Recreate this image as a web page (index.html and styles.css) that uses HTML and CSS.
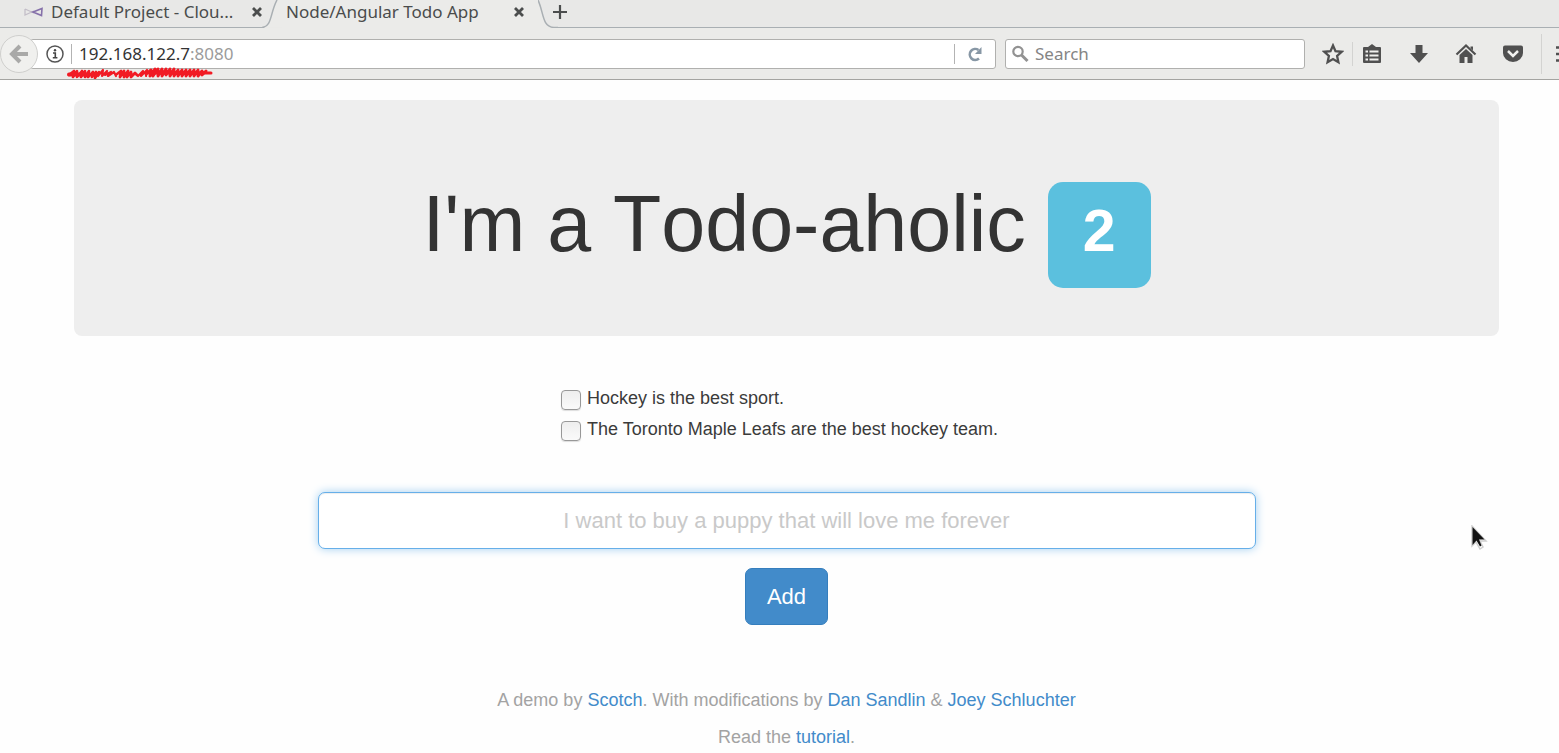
FILE: index.html
```
<!DOCTYPE html>
<html lang="en">
<head>
<meta charset="utf-8">
<title>Node/Angular Todo App</title>
<link rel="stylesheet" href="styles.css">
</head>
<body>
<header class="browser">
  <div class="tabs">
    <div class="tab tab-idle">
      <svg class="favicon" width="20" height="10" viewBox="0 0 20 10" fill="none"><path d="M1 2v6l9-4M1 2l9 4" stroke="#c3bec8" stroke-width="1.3"/><path d="M9 5l9-3.500-.5 7z" stroke="#8671aa" stroke-width="1.600"/></svg>
      <span class="tab-title">Default Project - Clou...</span>
      <button class="close" aria-label="Close Default Project"><svg width="10" height="10" viewBox="0 0 10 10"><path d="M1 1l8 8M9 1L1 9" stroke="#4b4d4d" stroke-width="2.800"/></svg></button>
    </div>
    <svg class="edge" width="20" height="28" viewBox="0 0 20 28"><path d="M15 0C8 13 10 27 0 27.500H20V0z" fill="#ebebe9"/><path d="M15 0C8 13 10 27 0 27.500" fill="none" stroke="#a9afb3" stroke-width="1.500"/></svg>
    <div class="tab tab-current">
      <span class="tab-title">Node/Angular Todo App</span>
      <button class="close" aria-label="Close Todo App"><svg width="10" height="10" viewBox="0 0 10 10"><path d="M1 1l8 8M9 1L1 9" stroke="#4b4d4d" stroke-width="2.800"/></svg></button>
    </div>
    <svg class="edge" width="20" height="28" viewBox="0 0 20 28"><path d="M0 0C6 13 4 27 16 27.500H20V28H0z" fill="#ebebe9"/><path d="M0 0C6 13 4 27 16 27.500H20" fill="none" stroke="#a9afb3" stroke-width="1.500"/></svg>
    <div class="strip"><button class="new-tab" aria-label="New tab"><svg width="16" height="16" viewBox="0 0 16 16"><path d="M8 1v14M1 8h14" stroke="#4b4d4d" stroke-width="2.200"/></svg></button></div>
  </div>
  <div class="toolbar">
    <button class="back" aria-label="Back"><svg width="20" height="20" viewBox="0 0 20 20"><path d="M11 2L3 10l8 8M4 10h15" fill="none" stroke="#a9a9a8" stroke-width="4"/></svg></button>
    <div class="address">
      <svg width="18" height="18" viewBox="0 0 18 18"><circle cx="9" cy="9" r="8" fill="none" stroke="#555" stroke-width="1.500"/><path d="M7 8h2.300v4.500M6.800 12.700h4.600" fill="none" stroke="#444" stroke-width="1.600"/><circle cx="9" cy="5.200" r="1.200" fill="#444"/></svg>
      <span class="divider"></span>
      <span class="url">192.168.122.7<span class="port">:8080</span></span>
      <span class="divider"></span>
      <button class="reload" aria-label="Reload"><svg width="16" height="16" viewBox="0 0 16 16"><path d="M12 12.500A5.500 5.500 0 1 1 11.500 4" fill="none" stroke="#8797a5" stroke-width="2.600"/><path d="M14.500 1v7H8z" fill="#8797a5"/></svg></button>
      <svg class="scribble" width="148" height="12" viewBox="0 0 148 12" fill="none" stroke="#f11b24" stroke-linecap="round" stroke-linejoin="round"><path d="M2 7.500h15" stroke-width="4"/><path d="M2 8l5-4-1 6 4-6 0 6 5-6-1 6 4-6v6l4-6-1 6 5-5-1 5 4-5-1 6 4-6" stroke-width="2.600"/><path d="M31 9l5-6-1 6 5-5-2 4 6-3-3 4 6-4 2 4" stroke-width="2.200"/><path d="M50 7l4-3-1 6 4-6v6l4-6-1 6 4-5v5l4-4 2 2" stroke-width="2.800"/><path d="M71 9l5-5-2 5 6-6-1 6" stroke-width="2.200"/><path d="M79 7l5-4-1 6 5-7-2 7 5-7v7l4-7v7l4-7v6l4-6v7l4-7v7l4-6v6l4-6v6l4-6v6l4-6v6l4-6v6l4-6v6l4-5v4l4-4" stroke-width="2.900"/><path d="M82 6h62" stroke-width="3"/></svg>
    </div>
    <label class="search">
      <svg width="18" height="18" viewBox="0 0 18 18" fill="none" stroke="#929292"><circle cx="7" cy="6.500" r="4.700" stroke-width="2.200"/><path d="M10.500 10l6 6" stroke-width="3"/></svg>
      <input class="search-input" type="text" placeholder="Search" aria-label="Search">
    </label>
    <nav class="tools" aria-label="Browser tools">
      <button class="tool" aria-label="Bookmark"><svg width="22" height="22" viewBox="0 0 22 22"><path d="M11 2.500l2.500 5.700 6.200.6-4.600 4.200 1.300 6.200L11 16l-5.400 3.200L6.900 13 2.300 8.800l6.200-.6z" fill="none" stroke="#505050" stroke-width="2.300"/></svg></button>
      <span class="tool-divider"></span>
      <button class="tool" aria-label="Bookmarks list"><svg width="22" height="22" viewBox="0 0 22 22"><path d="M3 4h4l4-3 4 3h4a1 1 0 0 1 1 1v14a1 1 0 0 1-1 1H3a1 1 0 0 1-1-1V5a1 1 0 0 1 1-1z" fill="#505050"/><path d="M4.500 8.500h2.500m1.500 0h9M4.500 12.500h2.500m1.500 0h9M4.500 16.500h2.500m1.500 0h9" stroke="#f1f1ef" stroke-width="2"/></svg></button>
      <button class="tool" aria-label="Downloads"><svg width="22" height="22" viewBox="0 0 22 22"><path d="M7.500 2h7v8H20l-9 10L2 10h5.500z" fill="#505050"/></svg></button>
      <button class="tool" aria-label="Home"><svg width="22" height="22" viewBox="0 0 22 22"><path d="M1.500 11.500L11 2.500l9.500 9" fill="none" stroke="#505050" stroke-width="2.200"/><path d="M15.500 3.500H18v4l-2.500-2.500zM4.500 12L11 6l6.500 6v8h-5v-6h-3v6h-5z" fill="#505050"/></svg></button>
      <button class="tool" aria-label="Pocket"><svg width="22" height="22" viewBox="0 0 22 22"><path d="M3 2.500h16a2 2 0 0 1 2 2V10a10 9 0 0 1-20 0V4.500a2 2 0 0 1 2-2z" fill="#505050"/><path d="M6 8l5 5 5-5" fill="none" stroke="#f1f1ef" stroke-width="2.500"/></svg></button>
      <span class="tool-divider tall"></span>
      <button class="menu" aria-label="Menu"><svg width="3" height="18" viewBox="0 0 3 18"><path d="M0 2.500h3M0 9h3M0 15.500h3" stroke="#505050" stroke-width="2.500"/></svg></button>
    </nav>
  </div>
</header>
<main class="page">
  <section class="jumbotron">
    <h1 class="headline">I'm a Todo-aholic <span class="count">2</span></h1>
  </section>
  <div class="todos">
    <label class="todo"><input class="tick" type="checkbox"> Hockey is the best sport.</label>
    <label class="todo"><input class="tick" type="checkbox"> The Toronto Maple Leafs are the best hockey team.</label>
  </div>
  <form class="todo-form">
    <input class="todo-input" type="text" placeholder="I want to buy a puppy that will love me forever" aria-label="New todo">
    <button class="add" type="button">Add</button>
  </form>
  <footer class="credits">
    <p>A demo by <a href="#">Scotch</a>. With modifications by <a href="#">Dan Sandlin</a> &amp; <a href="#">Joey Schluchter</a></p>
    <p>Read the <a href="#">tutorial</a>.</p>
  </footer>
</main>
<svg class="cursor" width="18" height="26" viewBox="0 0 18 26"><path d="M2 1v20l4-4 4 7 3-2-3-6h6z" fill="#fff" stroke="#cfcfcf" stroke-width="1.500"/><path d="M2.500 2v18l4-4.500 3.500 6 1.500-1-2.500-6h5.500z" fill="#111"/></svg>
</body>
</html>
```

FILE: styles.css
```
* { box-sizing: border-box; }
body {
  margin: 0;
  background: #fefefe;
  color: #3b3b3b;
  font-family: "Liberation Sans", Arial, sans-serif;
  font-size: 18px;
  overflow-x: hidden;
}
button { border: 0; padding: 0; background: none; font: inherit; }
svg { display: block; flex: none; }

.browser {
  background: #ebebe9;
  border-bottom: 1px solid #a4a4a1;
  font-family: "Noto Sans", sans-serif;
  font-size: 17px;
  color: #4a4c4c;
}
.tabs { display: flex; height: 28px; }
.tab { display: flex; align-items: center; padding-bottom: 4px; white-space: nowrap; }
.tab-title { flex: 1; line-height: 24px; }
.tab-idle { width: 262px; padding-left: 24px; gap: 7px; background: #e8e8e7; border-bottom: 1px solid #a9afb3; }
.tab-current { width: 256px; padding-left: 4px; }
.edge { background: #e8e8e7; }
.close { width: 10px; }
.tab-current .close { margin-right: 14px; }
.strip { flex: 1; display: flex; align-items: center; padding-bottom: 4px; background: #e8e8e7; border-bottom: 1px solid #a9afb3; }
.new-tab { margin-left: -6px; z-index: 1; }

.toolbar { display: flex; align-items: center; height: 51px; }
.back {
  position: relative;
  z-index: 1;
  display: grid;
  place-items: center;
  flex: none;
  width: 38px;
  height: 38px;
  border: 1px solid #cfcfcd;
  border-radius: 50%;
  background: #f0f0ee;
}
.address {
  position: relative;
  display: flex;
  align-items: center;
  flex: 1;
  height: 30px;
  margin-left: -8px;
  padding-left: 15px;
  gap: 7px;
  border: 1px solid #b0b0ae;
  border-radius: 3px;
  background: #fff;
}
.divider { width: 1px; height: 20px; background: #b3b3b3; }
.url { flex: 1; color: #333; }
.port { color: #9b9b9b; }
.reload { width: 33px; padding-left: 5px; }
.scribble { position: absolute; left: 36px; top: 27px; }
.search {
  display: flex;
  align-items: center;
  width: 300px;
  height: 30px;
  margin-left: 9px;
  padding-left: 5px;
  gap: 6px;
  border: 1px solid #b0b0ae;
  border-radius: 3px;
  background: #fff;
}
.search-input { flex: 1; min-width: 0; border: 0; padding: 0; background: none; font: inherit; }
.search-input::placeholder { color: #858585; opacity: 1; }
.tools { display: flex; align-items: center; margin-left: 17px; }
.tool { width: 22px; margin-right: 25px; }
.tool:first-child { margin-right: 8px; }
.tool-divider { width: 1px; height: 24px; margin-right: 8px; background: #d3d3d1; }
.tool-divider.tall { height: 40px; margin: 0 14px 0 -8px; }

.page { padding: 20px 60px 0 74px; }
.jumbotron {
  padding: 60px;
  border-radius: 8px;
  background: #eee;
  text-align: center;
  height: 236px;
}
.headline {
  margin: 0;
  padding-top: 20px;
  color: #333;
  font-size: 79px;
  font-weight: 400;
  font-kerning: none;
  line-height: 88px;
}
.count {
  display: inline-block;
  padding: 20px 35px 28px;
  border-radius: 15px;
  background: #5bc0de;
  color: #fff;
  font-size: 59px;
  font-weight: 700;
  line-height: 58px;
}
.todos, .todo-form { display: grid; grid-template-columns: repeat(12, 1fr); column-gap: 36px; }
.todos { margin-top: 50px; row-gap: 6px; }
.todo { grid-column: 5 / 10; display: flex; align-items: center; gap: 6px; line-height: 25px; white-space: nowrap; }
.tick {
  appearance: none;
  width: 20px;
  height: 20px;
  margin: 2px 0 0;
  border: 1px solid #989898;
  border-radius: 4px;
  background: linear-gradient(#eee, #fafafa);
  box-shadow: 0 1px 1px #ddd;
}
.todo-form { margin-top: 50px; row-gap: 19px; }
.todo-input {
  grid-column: 3 / 11;
  height: 57px;
  border: 1px solid #66afe9;
  border-radius: 7px;
  background: #fff;
  box-shadow: inset 0 1px 1px #eee, 0 0 10px #a3d0f2;
  font: 22px "Liberation Sans", Arial, sans-serif;
  text-align: center;
}
.todo-input::placeholder { color: #c9c9c9; opacity: 1; }
.add {
  grid-column: 1 / -1;
  justify-self: center;
  padding: 0 21px;
  border: 1px solid #357ebd;
  border-radius: 7px;
  background: #428bca;
  color: #fff;
  font-size: 22px;
  line-height: 55px;
}
.credits { margin-top: 63px; color: #a3a3a3; text-align: center; line-height: 25px; }
.credits p { margin: 0 0 12px; }
.credits a { color: #428bca; text-decoration: none; }
.cursor { position: absolute; left: 1470px; top: 525px; }
```
